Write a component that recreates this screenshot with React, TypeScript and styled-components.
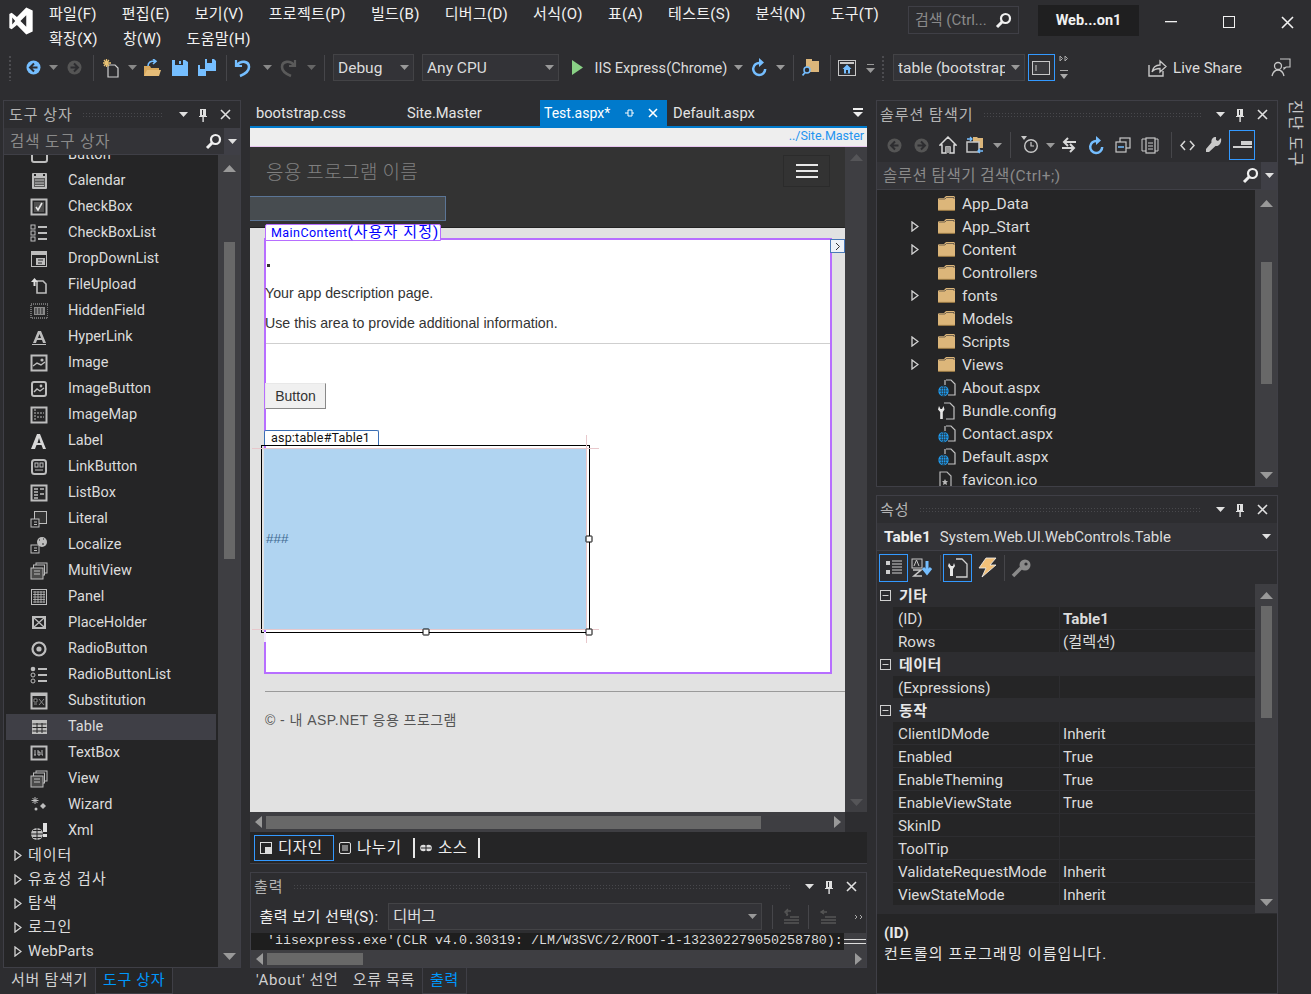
import React from "react";
import styled, { createGlobalStyle } from "styled-components";

const FONT = `Roboto, "Noto Sans CJK KR", sans-serif`;
const Global = createGlobalStyle`
  html, body { margin: 0; padding: 0; background: #2d2d30; }
  #root { width: 1311px; height: 994px; overflow: hidden; }
  * { box-sizing: border-box; }
`;

const Page = styled.div`
  width: 1311px; height: 994px; background: #2d2d30; color: #dcdcdc;
  font: 15px/20px ${FONT}; display: flex; flex-direction: column; overflow: hidden;
`;
const TitleBar = styled.div`display: flex; height: 50px; flex-shrink: 0;`;
const LogoSlot = styled.div`width: 49px; padding: 7px 0 0 9px; flex-shrink: 0;`;
const Menu = styled.div`
  width: 850px; flex-shrink: 0; display: flex; flex-wrap: wrap; gap: 0 25px; align-content: flex-start; padding-top: 2px;
`;
const MenuItem = styled.span`height: 25px; line-height: 25px; font-size: 15px; color: #f1f1f1; white-space: nowrap; letter-spacing: 0.3px;`;
const TitleSearch = styled.div`
  margin: 6px 0 0 9px; width: 111px; height: 28px; border: 1px solid #3f3f46; display: flex; align-items: center; flex-shrink: 0;
  padding: 0 6px; justify-content: space-between; color: #8a8a8a; white-space: nowrap;
`;
const SolutionName = styled.div`
  margin: 5px 0 0 19px; width: 101px; height: 31px; background: #1f1f20; color: #f1f1f1; flex-shrink: 0;
  font-weight: 700; font-size: 14.5px; display: flex; align-items: center; justify-content: center;
`;
const WinBtns = styled.div`display: flex; margin-left: 3px; flex-shrink: 0;`;
const WinBtn = styled.div`width: 58px; height: 44px; display: flex; align-items: center; justify-content: center;`;

const ToolRow = styled.div<{ $h: number }>`display: flex; align-items: center; height: ${(p) => p.$h}px; flex-shrink: 0;`;
const Slot = styled.div<{ $ml: number; $w: number }>`
  margin-left: ${(p) => p.$ml}px; width: ${(p) => p.$w}px; flex-shrink: 0;
  display: flex; align-items: center; justify-content: center; white-space: nowrap;
`;
const Spacer = styled.div<{ $h: number }>`height: ${(p) => p.$h}px; flex-shrink: 0;`;
const Sep = styled.div<{ $h?: number }>`width: 1px; height: ${(p) => p.$h ?? 26}px; background: #46464a;`;
const Grip = styled.div<{ $h?: number }>`
  width: 100%; height: ${(p) => p.$h ?? 26}px;
  background-image: radial-gradient(#4c4c50 0.8px, transparent 1px); background-size: 4px 4px;
`;
const Combo = styled.div`
  width: 100%; height: 27px; background: #333337; border: 1px solid #434346; padding: 0 4px;
  display: flex; align-items: center; justify-content: space-between; color: #dcdcdc; font-size: 15.5px; overflow: hidden;
`;
const ComboText = styled.span<{ $max?: number }>`overflow: hidden; white-space: nowrap; ${(p) => (p.$max ? `max-width:${p.$max}px;` : "")}`;
const ActiveBox = styled.div<{ $h: number }>`
  width: 100%; height: ${(p) => p.$h}px; border: 1px solid #3399ff; display: flex; align-items: center; justify-content: center;
`;
const LiveText = styled.span<{ $fs: number }>`font-size: ${(p) => p.$fs}px; color: #dcdcdc;`;

const Main = styled.div`display: flex; padding-left: 3px; height: 894px; flex-shrink: 0;`;
const Column = styled.div<{ $w: number; $ml?: number }>`
  width: ${(p) => p.$w}px; margin-left: ${(p) => p.$ml ?? 0}px; flex-shrink: 0; display: flex; flex-direction: column;
`;
const Panel = styled.div<{ $h?: number }>`
  display: flex; flex-direction: column; border: 1px solid #3f3f46; overflow: hidden; flex-shrink: 0;
  ${(p) => (p.$h ? `height:${p.$h}px;` : "flex:1;")}
`;
const HeaderRow = styled.div<{ $pl: number }>`display: flex; align-items: center; height: 27px; padding: 0 4px 0 ${(p) => p.$pl}px; flex-shrink: 0; color: #b4b4b4;`;
const HeaderTitle = styled.span`font-size: 15px; margin-right: 9px; letter-spacing: 1px; white-space: nowrap;`;
const HeaderGrip = styled.div`
  flex: 1; height: 6px; background-image: radial-gradient(#48484c 0.8px, transparent 1px); background-size: 3px 3px; margin-right: 10px;
`;
const HeaderBtn = styled.div`width: 22px; display: flex; justify-content: center; align-items: center;`;
const HeaderDrop = styled(HeaderBtn)`width: 18px;`;

const SearchBar = styled.div`display: flex; height: 27px; background: #333337; align-items: center; flex-shrink: 0; border-bottom: 1px solid #3f3f46;`;
const SearchText = styled.span`flex: 1; padding: 2px 0 0 6px; color: #8a8a8a; font-size: 15.5px; letter-spacing: 0.9px; white-space: nowrap;`;
const SolSearchText = styled(SearchText)`letter-spacing: 0.5px; padding-top: 1px;`;
const SearchDrop = styled.div`width: 16px; height: 100%; background: #3f3f46; display: flex; align-items: center; justify-content: center;`;
const SearchMag = styled.div`width: 22px; display: flex; justify-content: center;`;

const SplitBody = styled.div`flex: 1; display: flex; min-height: 0; overflow: hidden;`;
const ListPane = styled.div`flex: 1; background: #252526; overflow: hidden; min-width: 0;`;
const ScrollV = styled.div<{ $w?: number }>`
  width: ${(p) => p.$w ?? 22}px; background: #3e3e42; display: flex; flex-direction: column; align-items: center; flex-shrink: 0;
`;
const ArrowCell = styled.div<{ $h?: number }>`height: ${(p) => p.$h ?? 16}px; display: flex; align-items: center; justify-content: center; flex-shrink: 0;`;
const Thumb = styled.div<{ $h: number; $mt: number }>`
  width: 11px; height: ${(p) => p.$h}px; margin-top: ${(p) => p.$mt}px; background: #686868; flex-shrink: 0;
`;
const Fill = styled.div`flex: 1;`;

const ToolItem = styled.div<{ $sel?: boolean; $first?: boolean }>`
  height: 26px; display: flex; align-items: center; padding-left: ${(p) => (p.$sel ? 24 : 26)}px; font-size: 14.5px;
  margin: ${(p) => (p.$first ? "-13px 0 0" : p.$sel ? "0 2px" : "0")};
  background: ${(p) => (p.$sel ? "#3f3f46" : "transparent")}; color: #dcdcdc;
`;
const ToolIconBox = styled.div`width: 18px; height: 18px; margin-right: 20px; flex-shrink: 0; display: flex;`;
const Category = styled.div<{ $sp: number }>`
  height: 24px; display: flex; align-items: center; padding: 0 0 2px 10px; letter-spacing: ${(p) => p.$sp}px;
`;
const CatText = styled.span`margin-left: 6px;`;

const BottomTabs = styled.div<{ $ml: number }>`display: flex; height: 26px; flex-shrink: 0; margin-left: ${(p) => p.$ml}px;`;
const BottomTab = styled.div<{ $on?: boolean; $dark?: boolean; $px?: number }>`
  height: 26px; padding: 0 ${(p) => p.$px ?? 7}px; line-height: 24px; white-space: nowrap; letter-spacing: 0.7px; font-size: 15px;
  color: ${(p) => (p.$on ? "#0097fb" : "#d0d0d0")};
  ${(p) => (p.$on ? `background:${p.$dark ? "#252526" : "#2d2d30"};border:1px solid #3f3f46;border-top:none;` : "")}
`;

const DocTabs = styled.div`display: flex; height: 26px; position: relative; flex-shrink: 0; align-items: stretch;`;
const DocTab = styled.div<{ $w: number; $on?: boolean }>`
  width: ${(p) => p.$w}px; padding-left: ${(p) => (p.$on ? 4 : 6)}px; display: flex; align-items: center; gap: 14px;
  font-size: ${(p) => (p.$on ? 14 : 14.7)}px;
  background: ${(p) => (p.$on ? "#007acc" : "transparent")}; color: ${(p) => (p.$on ? "#fff" : "#e4e4e4")}; white-space: nowrap;
`;
const DocMenu = styled.div`margin-left: auto; width: 18px; display: flex; align-items: center; justify-content: center;`;
const PathBar = styled.div`
  height: 21px; flex-shrink: 0; border-top: 2px solid #007acc; background: #eeeeee; border-bottom: 1px solid #e6c3ef;
  text-align: right; padding-right: 3px; font-size: 12.5px; line-height: 16px; color: #2394f0;
`;
const EditorRow = styled.div`display: flex; height: 665px; flex-shrink: 0;`;
const Surface = styled.div`width: 595px; background: #e2e2e2; overflow: hidden; display: flex; flex-direction: column;`;
const NavBar = styled.div`height: 81px; flex-shrink: 0; background: #333333; border-bottom: 1px solid #222; position: relative;`;
const NavTop = styled.div`display: flex; height: 49px; align-items: center; padding: 0 15px 2px 16px; justify-content: space-between;`;
const Brand = styled.span`font: 300 19px/24px "Noto Sans CJK KR", sans-serif; color: #808080; letter-spacing: 0.4px;`;
const Burger = styled.div`
  width: 47px; height: 32px; border: 1px solid #2b2b2b; display: flex; flex-direction: column; gap: 4px; align-items: center; justify-content: center;
`;
const BurgerBar = styled.div`width: 22px; height: 2px; background: #e8e8e8;`;
const NavInput = styled.div`width: 196px; height: 25px; background: #474c50; border: 1px solid #5b7596; border-left: none;`;
const DesignBody = styled.div`padding: 10px 0 0 14px; flex: 1;`;
const Content = styled.div`
  position: relative; width: 568px; height: 436px; background: #fff; border: 2px solid #b76eff; display: flex; flex-direction: column;
  font: 14.2px/20px "Liberation Sans", "Noto Sans CJK KR", sans-serif; color: #333;
`;
const ContentTag = styled.div`
  position: absolute; left: -1px; top: -16px; width: 176px; height: 17px; padding-left: 5px; background: #fff; border: 1px solid #b76eff;
  border-radius: 2px 2px 0 0; color: #0000ff; font: 12.5px/15px Roboto, "Noto Sans CJK KR", sans-serif; white-space: nowrap; letter-spacing: 0.45px;
`;
const TagKo = styled.span`font-size: 15px; letter-spacing: 1.1px;`;
const SmartTag = styled.div`
  position: absolute; right: -15px; top: -1px; width: 15px; height: 14px; background: #eef2f8; border: 1px solid #4a78b8;
  display: flex; align-items: center; justify-content: center;
`;
const Dot = styled.div`width: 3px; height: 3px; background: #333; margin: 24px 0 0 1px;`;
const Para = styled.div<{ $mt: number }>`margin: ${(p) => p.$mt}px 0 0 -1px; height: 20px; white-space: nowrap;`;
const Rule = styled.div`height: 1px; background: #cfcfcf; margin-top: 10px; flex-shrink: 0;`;
const AspButton = styled.div`
  width: 61px; height: 26px; margin: 39px 0 0 -1px; background: #f0f0f0; border: 1px solid #e8e8e8; border-right-color: #888; border-bottom-color: #888;
  display: flex; align-items: center; justify-content: center; color: #333; font-size: 14px;
`;
const TableTag = styled.div`
  width: 115px; height: 15px; margin: 21px 0 0 -2px; background: #fff; border: 1px solid #3a6fb5; border-bottom: none; border-radius: 2px 2px 0 0;
  font: 12.5px/14px Roboto, sans-serif; color: #111; padding-left: 6px; white-space: nowrap; letter-spacing: 0.2px;
`;
const Selection = styled.div`
  position: relative; width: 329px; height: 188px; margin-left: -5px; border: 1px solid #000; padding: 2px; flex-shrink: 0;
`;
const BlueCell = styled.div`
  height: 182px; background: #b0d4f1; display: flex; align-items: center; padding-left: 2px; font-size: 13.5px; color: #3f6a92;
`;
const Handle = styled.div<{ $x: string; $y: string }>`
  position: absolute; width: 7px; height: 7px; background: #fff; border: 1px solid #000; border-radius: 1px;
  left: ${(p) => p.$x}; top: ${(p) => p.$y}; transform: translate(-50%, -50%);
`;
const GuideH = styled.div<{ $t: number }>`position: absolute; left: -10px; right: -10px; top: ${(p) => p.$t}px; height: 1px; background: #e8c8cc;`;
const GuideV = styled.div`position: absolute; right: 2px; top: -11px; bottom: -11px; width: 1px; background: #e8c8cc;`;
const BorderGap = styled.div`position: absolute; left: 2px; top: 100%; width: 2px; height: 10px; background: #f4eaff;`;
const FooterRule = styled.div`height: 1px; background: #9a9a9a; margin: 17px 0 0 1px;`;
const FooterText = styled.div`font: 14px/20px "Liberation Sans", "Noto Sans CJK KR", sans-serif; color: #555; margin: 18px 0 0 1px; white-space: nowrap; letter-spacing: 0.45px;`;

const HScroll = styled.div<{ $h: number; $w?: number }>`
  height: ${(p) => p.$h}px; display: flex; align-items: center; background: #3e3e42; flex-shrink: 0; ${(p) => (p.$w ? `width:${p.$w}px;` : "")}
`;
const HArrow = styled.div`width: 16px; display: flex; justify-content: center; flex-shrink: 0;`;
const HThumb = styled.div<{ $w: number; $h: number }>`width: ${(p) => p.$w}px; height: ${(p) => p.$h}px; background: #686868; flex-shrink: 0;`;
const HRow = styled.div`display: flex; flex-shrink: 0;`;
const Corner = styled.div`width: 22px; flex-shrink: 0; background: #2d2d30;`;
const ViewBar = styled.div`
  height: 32px; background: #252526; flex-shrink: 0; display: flex; align-items: center; padding-left: 4px; font-size: 15.5px; letter-spacing: 0.6px;
  border-bottom: 1px solid #3f3f46; color: #eee;
`;
const ViewBtn = styled.div<{ $on?: boolean; $w: number }>`
  width: ${(p) => p.$w}px; height: 26px; display: flex; align-items: center; gap: 6px; padding-left: 5px;
  ${(p) => (p.$on ? "border:1px solid #3399ff;" : "")}
`;
const ViewSep = styled.div<{ $ml: number }>`width: 2px; height: 20px; background: #e8e8e8; margin-left: ${(p) => p.$ml}px;`;

const OutputToolbar = styled.div`height: 33px; flex-shrink: 0;`;
const OutputLine = styled.div`height: 17px; display: flex; flex-shrink: 0; background: #3e3e42;`;
const OutputText = styled.div`
  width: 593px; background: #1e1e1e; font: 13.33px/16px "Liberation Mono", monospace; color: #dcdcdc; padding-left: 16px; white-space: pre; overflow: hidden;
`;
const Splitter = styled.div`flex: 1; height: 5px; margin-top: 6px; border-top: 1px solid #ddd; border-bottom: 1px solid #ddd;`;
const OutputLabel = styled.span`font-size: 15px; letter-spacing: 0.5px; color: #f1f1f1;`;

const SolSearch = styled(SearchBar)`height: 28px;`;
const TreeRow = styled.div`height: 23px; display: flex; align-items: center; flex-shrink: 0; color: #dcdcdc; font-size: 15.5px;`;
const TreeArrow = styled.div`width: 61px; padding-left: 34px; flex-shrink: 0; display: flex;`;
const TreeIcon = styled.div`width: 24px; flex-shrink: 0; display: flex;`;
const TreeList = styled.div`padding-top: 2px;`;

const ObjectRow = styled.div`
  height: 28px; display: flex; align-items: center; padding: 0 6px 0 7px; background: #333337; flex-shrink: 0; border-bottom: 1px solid #3f3f46;
`;
const ObjName = styled.b`margin-right: 9px; font-weight: 700; color: #eee; font-size: 15.5px;`;
const ObjType = styled.span`flex: 1; color: #dcdcdc; font-size: 15px;`;
const PropGrid = styled.div`height: 329px; display: flex; flex-shrink: 0; overflow: hidden;`;
const PropList = styled.div`flex: 1; background: #2d2d30; overflow: hidden; min-width: 0;`;
const CatRow = styled.div`height: 23px; display: flex; align-items: center; padding-left: 3px; font-weight: 700; color: #e8e8e8; background: #2d2d30; letter-spacing: 0.5px;`;
const CatLabel = styled.span`margin-left: 8px;`;
const PropRow = styled.div`display: flex; height: 23px; margin-left: 16px; background: #2d2d30; gap: 1px;`;
const PropName = styled.div`width: 166px; flex-shrink: 0; background: #252526; padding-left: 5px; line-height: 24px; height: 22px; white-space: nowrap; font-size: 15.2px; overflow: hidden;`;
const PropValue = styled.div<{ $bold?: boolean }>`
  flex: 1; background: #252526; padding-left: 3px; line-height: 24px; height: 22px; font-size: 15.2px; font-weight: ${(p) => (p.$bold ? 700 : 400)};
`;
const Description = styled.div`flex: 1; background: #252526; padding: 9px 7px; font-size: 15px; line-height: 21px; color: #e8e8e8; border-top: 1px solid #2d2d30;`;
const DescTitle = styled.div`font-weight: 700;`;
const DescText = styled.div`letter-spacing: 1.1px;`;

const SideStrip = styled.div`
  margin: 0 0 0 7px; width: 19px; height: 66px; writing-mode: vertical-rl; text-orientation: sideways; font-size: 15.5px; line-height: 19px; color: #c8c8c8;
  letter-spacing: 1.3px; white-space: nowrap;
`;

/* icons */
const Svg = ({ w = 16, h = 16, vb, children }: { w?: number; h?: number; vb?: string; children: React.ReactNode }) => (
  <svg width={w} height={h} viewBox={vb ?? `0 0 ${w} ${h}`} style={{ display: "block", flexShrink: 0 }}>{children}</svg>
);
const Drop = ({ c = "#999" }: { c?: string }) => <Svg w={9} h={5}><polygon points="0,0 9,0 4.5,5" fill={c} /></Svg>;
const Pin = () => (
  <Svg w={10} h={14}><path d="M2 1h6v7h1v1H1V8h1z M4 2v5h1V2z" fill="#e0e0e0" fillRule="evenodd" /><rect x="4.4" y="9" width="1.4" height="5" fill="#e0e0e0" /></Svg>
);
const Cross = ({ c = "#e0e0e0", s = 11 }: { c?: string; s?: number }) => (
  <Svg w={s} h={s}><path d={`M1 1L${s - 1} ${s - 1}M${s - 1} 1L1 ${s - 1}`} stroke={c} strokeWidth="1.6" /></Svg>
);
const Mag = ({ c = "#f0f0f0" }: { c?: string }) => (
  <Svg w={17} h={17}><circle cx="10.5" cy="6.5" r="4.5" fill="none" stroke={c} strokeWidth="2.2" /><path d="M7 10L2 15" stroke={c} strokeWidth="3" /></Svg>
);
const TriR = () => <Svg w={8} h={11}><polygon points="1,1 7,5.5 1,10" fill="none" stroke="#d4d4d4" strokeWidth="1.3" /></Svg>;
const Logo = () => (
  <Svg w={24} h={28} vb="0 0 20 24"><path fillRule="evenodd" fill="#fff" d="M14.5 0.5L20 3V21L14.5 23.5L6.5 15.5L2 19L0 18V6L2 5L6.5 8.5ZM14.5 7L9.5 12L14.5 17ZM2.5 9V15L5 12Z" /></Svg>
);
const CircleNav = ({ dir, c, a }: { dir: "l" | "r"; c: string; a: string }) => (
  <Svg w={15} h={15}>
    <circle cx="7.5" cy="7.5" r="7" fill={c} />
    <path d={dir === "l" ? "M8 3.5L4 7.5L8 11.5M4.5 7.5H11.5" : "M7 3.5L11 7.5L7 11.5M10.5 7.5H3.5"} stroke={a} strokeWidth="2" fill="none" />
  </Svg>
);
const NewProj = () => (
  <Svg w={18} h={20}>
    <path d="M6 7h7l3 3v9H6z" fill="none" stroke="#d0d0d0" strokeWidth="1.2" />
    <path d="M4.5 1v8M1 5h8M2 2l5 6M7 2l-5 6" stroke="#e8c274" strokeWidth="1.3" />
  </Svg>
);
const OpenFolder = () => (
  <Svg w={19} h={18}>
    <path d="M1 7h6l1 2h8v8H1z" fill="#d8a85c" />
    <path d="M5 7C5 3 8 2 12 2M10 0l3 2.2L10 5" stroke="#75beff" strokeWidth="1.6" fill="none" />
    <path d="M1 17L4 11H18L16 17z" fill="#e6bd78" />
  </Svg>
);
const Save = () => (
  <Svg w={16} h={16}><path d="M0 0h3v5h8V0h2l3 2v14H0z" fill="#75beff" /><rect x="7" y="1" width="2" height="3" fill="#75beff" /></Svg>
);
const SaveAll = () => (
  <Svg w={18} h={17}>
    <path d="M7 0h2v4h5V0h2l2 2v10H7z" fill="#75beff" />
    <path d="M0 6h2v4h5V6h1v11H0z" fill="#75beff" />
  </Svg>
);
const Undo = ({ c }: { c: string }) => (
  <Svg w={18} h={20}><path d="M2 2v6h6" stroke={c} strokeWidth="2.2" fill="none" /><path d="M3 7C7 2 15 3 15 9C15 13 11 16 6 18" stroke={c} strokeWidth="2.6" fill="none" /></Svg>
);
const Redo = () => (
  <Svg w={18} h={20}><path d="M16 2v6h-6" stroke="#5a5a5a" strokeWidth="2.2" fill="none" /><path d="M15 7C11 2 3 3 3 9C3 13 7 16 12 18" stroke="#5a5a5a" strokeWidth="2.6" fill="none" /></Svg>
);
const Play = () => <Svg w={11} h={15}><polygon points="0,0 11,7.5 0,15" fill="#89d185" /></Svg>;
const Refresh = () => (
  <Svg w={16} h={19}><path d="M9 5A6 6 0 1 0 14.2 11" stroke="#75beff" strokeWidth="2.5" fill="none" /><polygon points="8,0 13,4.5 8,9" fill="#75beff" /></Svg>
);
const FolderFind = () => (
  <Svg w={17} h={19}>
    <path d="M4 1h6v2h7v11H4z" fill="#dcb67a" />
    <circle cx="5" cy="12" r="3" fill="#2d2d30" stroke="#75beff" strokeWidth="1.5" />
    <path d="M3 14.5L0.5 17.5" stroke="#75beff" strokeWidth="1.8" />
  </Svg>
);
const BrowserHome = () => (
  <Svg w={18} h={18}>
    <rect x="0.5" y="1.5" width="17" height="15" fill="none" stroke="#c8c8c8" />
    <rect x="2" y="3" width="14" height="2" fill="#c8c8c8" />
    <path d="M9 5.5L13.5 10H12v4.5H6V10H4.5z" fill="#75beff" />
    <rect x="8" y="11" width="2" height="3.5" fill="#2d2d30" />
  </Svg>
);
const ConsoleBox = () => (
  <Svg w={18} h={14}><rect x="0.5" y="0.5" width="17" height="13" fill="#3a3a3d" stroke="#c8c8c8" /><path d="M4 4v6" stroke="#c8c8c8" /></Svg>
);
const OverflowArrows = () => (
  <Svg w={10} h={26}>
    <path d="M1 1l2.5 2.5L1 6zM6 1l2.5 2.5L6 6z" fill="none" stroke="#aaa" />
    <rect x="1" y="15" width="8" height="1" fill="#aaa" />
    <polygon points="1,19 9,19 5,24" fill="#aaa" />
  </Svg>
);
const OverflowDrop = () => (
  <Svg w={9} h={12}><rect x="1" y="2" width="7" height="1" fill="#999" /><polygon points="0,6 9,6 4.5,11" fill="#999" /></Svg>
);
const LiveShareIcon = () => (
  <Svg w={19} h={18}>
    <path d="M1 6v11h14v-5" fill="none" stroke="#c8c8c8" strokeWidth="1.4" />
    <path d="M4 13C5 8 8 6 12 6V2l6 5.5L12 13V9.5C9 9.5 6 10 4 13z" fill="none" stroke="#c8c8c8" strokeWidth="1.3" />
  </Svg>
);
const Feedback = () => (
  <Svg w={20} h={19}>
    <path d="M9 1h10v8h-4l-2 2V9" fill="none" stroke="#c8c8c8" strokeWidth="1.1" />
    <circle cx="7" cy="8" r="3.5" fill="none" stroke="#c8c8c8" strokeWidth="1.3" />
    <path d="M1 18C2 14 4 12 7 12S12 14 13 18" fill="none" stroke="#c8c8c8" strokeWidth="1.3" />
  </Svg>
);
const Minimize = () => <Svg w={12} h={2}><rect width="12" height="1.3" fill="#f1f1f1" /></Svg>;
const Maximize = () => <Svg w={12} h={12}><rect x="0.5" y="0.5" width="11" height="11" fill="none" stroke="#f1f1f1" /></Svg>;

const Folder = () => (
  <Svg w={17} h={15}><path d="M0 3L1 2H6L8 0H16L17 1V14L16 15H1L0 14z" fill="#dcb67a" /><path d="M1 3h6l1.5-1.5H16V3" fill="none" stroke="#2d2d30" strokeWidth="0.6" /><path d="M0 14.4h17" stroke="#8a6e3e" strokeWidth="1" /></Svg>
);
const AspxFile = () => (
  <Svg w={18} h={18}>
    <path d="M8 1h5l4 4v11H10M7 6V1" fill="none" stroke="#c4c4c4" strokeWidth="1.2" />
    <circle cx="5.5" cy="12" r="5.2" fill="#1f9cf0" />
    <path d="M0.5 12h10M5.5 7v10M2 9.3h7M2 14.7h7" stroke="#252526" strokeWidth="0.6" />
    <ellipse cx="5.5" cy="12" rx="2.3" ry="5" fill="none" stroke="#252526" strokeWidth="0.6" />
  </Svg>
);
const ConfigFile = () => (
  <Svg w={18} h={18}>
    <path d="M6 1h6l4 4v12H8" fill="none" stroke="#c4c4c4" strokeWidth="1.2" />
    <path d="M1 4l1.5 3h1.5l1.5-3 1 3.5L4.8 10v7H2.2v-7L0 7.5z" fill="#e6e6e6" />
  </Svg>
);
const IcoFile = () => (
  <Svg w={16} h={18}>
    <path d="M2 17V1h7l4 4v12z" fill="none" stroke="#b8b8b8" strokeWidth="1.2" />
    <path d="M7 8l1 2h2l-1.5 1.5L9 14l-2-1-2 1 .5-2.5L4 10h2z" fill="#b8b8b8" />
  </Svg>
);

const g = "#bdbdbd";
const dk = "#252526";
const toolIcons: Record<string, React.ReactNode> = {
  Calendar: <><rect x="2" y="1" width="15" height="16" rx="1" fill={g} /><rect x="4" y="6" width="11" height="9" fill="#5a5a5a" /><path d="M5 8h9M5 11h9M5 13.5h9" stroke={g} /><rect x="4" y="2" width="2" height="2" fill={dk} /><rect x="13" y="2" width="2" height="2" fill={dk} /></>,
  CheckBox: <><rect x="1.5" y="1.5" width="15" height="15" fill="none" stroke={g} strokeWidth="2" /><rect x="4" y="4" width="10" height="10" fill="#505050" /><path d="M6 9l2 3 4-7" fill="none" stroke="#e8e8e8" strokeWidth="1.6" /></>,
  CheckBoxList: <><rect x="1" y="1" width="4" height="4" fill="none" stroke={g} /><rect x="1" y="7" width="4" height="4" fill="none" stroke={g} /><rect x="1" y="13" width="4" height="4" fill="none" stroke={g} /><path d="M8 3h9M8 9h9M8 15h9" stroke={g} strokeWidth="2" /></>,
  DropDownList: <><rect x="1.5" y="1.5" width="15" height="15" fill="none" stroke={g} /><rect x="1" y="1" width="16" height="4" fill={g} /><path d="M6 8h9v7H6z" fill={g} /><path d="M8 10h5M8 13h4" stroke={dk} /></>,
  FileUpload: <><path d="M7 5h6l3 3v9H7z" fill="none" stroke={g} strokeWidth="1.6" /><path d="M1 6l3.5-4L8 6H5.5v4h-2V6z" fill="#e0e0e0" /></>,
  HiddenField: <><rect x="1" y="2" width="17" height="14" fill="none" stroke={g} strokeDasharray="1 1" /><rect x="4" y="5" width="11" height="8" fill="#8a8a8a" /><path d="M6 6v6M9 6v6M12 6v6" stroke={dk} /></>,
  HyperLink: <><path d="M3 15L8 3h3l5 12h-3l-1-3H7l-1 3zM8 10h3L9.5 6z" fill={g} fillRule="evenodd" /><path d="M2 16.5h14" stroke={g} /></>,
  Image: <><rect x="1.5" y="1.5" width="15" height="15" fill="none" stroke={g} strokeWidth="2" /><path d="M3 12l4-3 4 2 4-3" fill="none" stroke={g} strokeWidth="1.4" /><circle cx="12" cy="6" r="1.6" fill={g} /></>,
  ImageButton: <><rect x="2" y="2" width="14" height="14" rx="2" fill="none" stroke={g} strokeWidth="2" /><path d="M4 12l3-3 3 2 4-3" fill="none" stroke={g} strokeWidth="1.4" /><circle cx="11" cy="6" r="1.4" fill={g} /></>,
  ImageMap: <><rect x="1.5" y="1.5" width="15" height="15" fill="none" stroke={g} strokeWidth="2" /><path d="M5 3v12" stroke={g} strokeDasharray="2 1" /><path d="M7 7h7M7 11h7" stroke={g} strokeDasharray="2 1" /></>,
  Label: <path d="M1 17L7 2h3l6 15h-3l-1.5-4h-5L5 17zM7.5 11h3L9 6z" fill="#d8d8d8" fillRule="evenodd" />,
  LinkButton: <><rect x="2" y="2" width="14" height="14" rx="2.5" fill="none" stroke={g} strokeWidth="2" /><rect x="5" y="5" width="3" height="4" fill="none" stroke={g} /><rect x="10" y="5" width="3" height="4" fill="none" stroke={g} /><path d="M5 12h8" stroke={g} /></>,
  ListBox: <><rect x="1.5" y="1.5" width="15" height="15" fill="none" stroke={g} strokeWidth="2" /><path d="M4 5h4M4 8h4M4 11h4M4 14h4M10 5h4M10 10h4" stroke={g} strokeWidth="1.6" /></>,
  Literal: <><rect x="4.5" y="1.5" width="12" height="12" fill="#333" stroke={g} /><rect x="1" y="9" width="8" height="8" fill={dk} stroke={g} /><path d="M4 12h3M4 14.5h3" stroke={g} /></>,
  Localize: <><circle cx="12" cy="6" r="5" fill={g} /><path d="M9 4h1M12 8h2M13 3h1" stroke={dk} /><rect x="1" y="9" width="8" height="8" fill={dk} stroke={g} /><path d="M4 12h3M4 14.5h3" stroke={g} /></>,
  MultiView: <><rect x="6" y="1" width="11" height="10" fill="none" stroke={g} /><rect x="3.5" y="3" width="11" height="10" fill={dk} stroke={g} /><rect x="1" y="6" width="12" height="11" fill="#4a4a4a" stroke={g} /><path d="M4 9h6M4 12h6" stroke={g} /></>,
  Panel: <><rect x="1.5" y="1.5" width="15" height="15" fill="none" stroke={g} /><path d="M3 4h12M3 6.5h12M3 9h12M3 11.5h12M3 14h12M5 3v12M8 3v12M11 3v12M14 3v12" stroke={g} strokeWidth="0.8" /></>,
  PlaceHolder: <><rect x="3" y="3" width="12" height="11" fill="none" stroke={g} strokeWidth="2" /><path d="M4 4l10 9M14 4L4 13" stroke={g} strokeWidth="1.3" /></>,
  RadioButton: <><circle cx="9" cy="9" r="6.5" fill="none" stroke={g} strokeWidth="2.2" /><circle cx="9" cy="9" r="2.6" fill={g} /></>,
  RadioButtonList: <><circle cx="3" cy="3" r="2.3" fill={g} /><circle cx="3" cy="9" r="2" fill="none" stroke={g} /><circle cx="3" cy="15" r="2" fill="none" stroke={g} /><path d="M8 3h9M8 9h9M8 15h9" stroke={g} strokeWidth="2" /></>,
  Substitution: <><rect x="1.5" y="1.5" width="15" height="15" fill="none" stroke={g} strokeWidth="2" /><rect x="1" y="1" width="16" height="3" fill={g} /><path d="M4 7h3v3H4zM9 7l5 6M14 7l-5 6M4 12h3" stroke="#8a8a8a" /></>,
  Table: <><rect x="2" y="2" width="15" height="14" fill={g} /><path d="M2.5 6h14M2.5 9.5h14M2.5 13h14M7 5v10M12 5v10" stroke={dk} /></>,
  TextBox: <><rect x="1.5" y="2.5" width="15" height="13" fill="none" stroke={g} strokeWidth="2" /><path d="M4 11h2M5 6v5M8 6v5h2V8H8M12 6v5h1" stroke={g} fill="none" /></>,
  View: <><rect x="6" y="1" width="11" height="10" fill="none" stroke={g} /><rect x="3.5" y="3" width="11" height="10" fill={dk} stroke={g} /><rect x="1" y="6" width="12" height="11" fill="#4a4a4a" stroke={g} /><path d="M4 9h6M4 12h6" stroke={g} /></>,
  Wizard: <><path d="M5 1v7M1.5 4.5h7M2.5 2l5 5M7.5 2l-5 5" stroke={g} /><path d="M13 7l3 3-3 3-3-3z" fill={g} /><circle cx="6" cy="13" r="1.5" fill={g} /></>,
  Xml: <><circle cx="7" cy="12" r="6" fill={g} /><path d="M1 12h12M7 6v12M3 8.5h8M3 15.5h8" stroke={dk} /><rect x="13" y="1" width="4" height="9" fill="#e0e0e0" /><rect x="13" y="12" width="4" height="3" fill="#e0e0e0" /></>,
};
const tools = ["Calendar", "CheckBox", "CheckBoxList", "DropDownList", "FileUpload", "HiddenField", "HyperLink", "Image", "ImageButton", "ImageMap", "Label", "LinkButton", "ListBox", "Literal", "Localize", "MultiView", "Panel", "PlaceHolder", "RadioButton", "RadioButtonList", "Substitution", "Table", "TextBox", "View", "Wizard", "Xml"];

type PlacedItem = { c: number; w?: number; n?: React.ReactNode };
const Placed = ({ items, origin, h }: { items: PlacedItem[]; origin: number; h: number }) => {
  let right = origin;
  return (
    <ToolRow $h={h}>
      {items.map((it, i) => {
        const w = it.w ?? 18;
        const left = it.c - w / 2;
        const ml = left - right;
        right = left + w;
        return <Slot key={i} $ml={ml} $w={w}>{it.n}</Slot>;
      })}
    </ToolRow>
  );
};

const PanelHeader = ({ title, pl = 3 }: { title: string; pl?: number }) => (
  <HeaderRow $pl={pl}>
    <HeaderTitle>{title}</HeaderTitle>
    <HeaderGrip />
    <HeaderDrop><Drop c="#e0e0e0" /></HeaderDrop>
    <HeaderBtn><Pin /></HeaderBtn>
    <HeaderBtn><Cross /></HeaderBtn>
  </HeaderRow>
);
const ScrollUp = ({ c = "#999" }: { c?: string }) => <Svg w={13} h={7}><polygon points="6.5,0 13,7 0,7" fill={c} /></Svg>;
const ScrollDown = ({ c = "#999" }: { c?: string }) => <Svg w={13} h={7}><polygon points="0,0 13,0 6.5,7" fill={c} /></Svg>;
const HL = () => <Svg w={7} h={12}><polygon points="7,0 7,12 0,6" fill="#999" /></Svg>;
const HR = () => <Svg w={7} h={12}><polygon points="0,0 0,12 7,6" fill="#999" /></Svg>;
const Minus = () => (
  <Svg w={11} h={11}><rect x="0.5" y="0.5" width="10" height="10" fill="none" stroke="#d0d0d0" /><path d="M2.5 5.5h6" stroke="#d0d0d0" /></Svg>
);

const treeItems: [string, string, boolean][] = [
  ["App_Data", "f", false], ["App_Start", "f", true], ["Content", "f", true], ["Controllers", "f", false], ["fonts", "f", true],
  ["Models", "f", false], ["Scripts", "f", true], ["Views", "f", true], ["About.aspx", "a", false], ["Bundle.config", "c", false],
  ["Contact.aspx", "a", false], ["Default.aspx", "a", false], ["favicon.ico", "i", false],
];
const categories: [string, number][] = [["데이터", 1], ["유효성 검사", 1], ["탐색", 1], ["로그인", 1], ["WebParts", 0.1]];

export default function App() {
  const mainTools: PlacedItem[] = [
    { c: 10, w: 4, n: <Grip /> },
    { c: 33, n: <CircleNav dir="l" c="#75beff" a="#2d2d30" /> },
    { c: 53, w: 10, n: <Drop c="#888" /> },
    { c: 74, n: <CircleNav dir="r" c="#555" a="#2d2d30" /> },
    { c: 93, w: 1, n: <Sep /> },
    { c: 111, n: <NewProj /> },
    { c: 132, w: 10, n: <Drop c="#888" /> },
    { c: 152, w: 20, n: <OpenFolder /> },
    { c: 180, n: <Save /> },
    { c: 207, n: <SaveAll /> },
    { c: 226, w: 1, n: <Sep /> },
    { c: 243, n: <Undo c="#75beff" /> },
    { c: 267, w: 10, n: <Drop c="#888" /> },
    { c: 288, n: <Redo /> },
    { c: 311, w: 10, n: <Drop c="#666" /> },
    { c: 324, w: 1, n: <Sep /> },
    { c: 373.5, w: 81, n: <Combo><ComboText>Debug</ComboText><Drop c="#999" /></Combo> },
    { c: 490.5, w: 137, n: <Combo><ComboText>Any CPU</ComboText><Drop c="#999" /></Combo> },
    { c: 577, w: 12, n: <Play /> },
    { c: 661, w: 134, n: <LiveText $fs={14.6}>IIS Express(Chrome)</LiveText> },
    { c: 738, w: 10, n: <Drop c="#999" /> },
    { c: 759, n: <Refresh /> },
    { c: 780, w: 10, n: <Drop c="#999" /> },
    { c: 793, w: 1, n: <Sep /> },
    { c: 810, n: <FolderFind /> },
    { c: 830, w: 1, n: <Sep /> },
    { c: 847, n: <BrowserHome /> },
    { c: 870, w: 10, n: <OverflowDrop /> },
    { c: 883, w: 4, n: <Grip /> },
    { c: 959, w: 132, n: <Combo><ComboText $max={107}>table (bootstrap</ComboText><Drop c="#999" /></Combo> },
    { c: 1041, w: 27, n: <ActiveBox $h={27}><ConsoleBox /></ActiveBox> },
    { c: 1064, w: 10, n: <OverflowArrows /> },
    { c: 1157, n: <LiveShareIcon /> },
    { c: 1207.5, w: 70, n: <LiveText $fs={15}>Live Share</LiveText> },
    { c: 1281, w: 20, n: <Feedback /> },
  ];
  const solTools: PlacedItem[] = [
    { c: 894, n: <CircleNav dir="l" c="#555" a="#2d2d30" /> },
    { c: 921, n: <CircleNav dir="r" c="#555" a="#2d2d30" /> },
    { c: 948, w: 20, n: <Svg w={18} h={18}><path d="M9 1L17 9H15V17H11V11H7V17H3V9H1z" fill="none" stroke="#d8d8d8" strokeWidth="1.5" /><rect x="7" y="11" width="4" height="6" fill="#999" /></Svg> },
    { c: 975, w: 20, n: <Svg w={20} h={19}><path d="M8 1h4l1 1h5v10H8z" fill="#dcb67a" /><rect x="2" y="6" width="12" height="10" fill="#2d2d30" stroke="#c8c8c8" strokeWidth="1.5" /><path d="M2 3h5M5 1l2 2-2 2M18 15h-4M15 13l-2 2 2 2" stroke="#75beff" strokeWidth="1.3" fill="none" /></Svg> },
    { c: 997, w: 10, n: <Drop c="#999" /> },
    { c: 1010, w: 1, n: <Sep /> },
    { c: 1030, w: 20, n: <Svg w={18} h={18}><polygon points="0,0 6,0 3,4" fill="#c8c8c8" /><circle cx="10" cy="10" r="6.3" fill="none" stroke="#c8c8c8" strokeWidth="1.4" /><path d="M10 6v4h3" stroke="#c8c8c8" strokeWidth="1.2" fill="none" /></Svg> },
    { c: 1050, w: 10, n: <Drop c="#999" /> },
    { c: 1069, n: <Svg w={16} h={16}><path d="M15 5H3M7 1L3 5l4 4M1 11h12M9 7l4 4-4 4" stroke="#d8d8d8" strokeWidth="2" fill="none" /></Svg> },
    { c: 1096, n: <Refresh /> },
    { c: 1123, n: <Svg w={16} h={16}><rect x="5" y="1" width="10" height="10" fill="none" stroke="#c8c8c8" strokeWidth="1.2" /><rect x="1" y="5" width="10" height="10" fill="#2d2d30" stroke="#c8c8c8" strokeWidth="1.2" /><path d="M3 10h6" stroke="#75beff" strokeWidth="1.5" /></Svg> },
    { c: 1150, n: <Svg w={18} h={18}><path d="M5 3H1v12h4M13 3h4v12h-4" fill="none" stroke="#c8c8c8" /><rect x="5" y="2" width="9" height="15" fill="#2d2d30" stroke="#c8c8c8" strokeWidth="1.2" /><path d="M7 7h5M7 10h5M7 13h5" stroke="#c8c8c8" /></Svg> },
    { c: 1171, w: 1, n: <Sep /> },
    { c: 1187, n: <Svg w={15} h={11}><path d="M5 1L1 5.5 5 10M10 1l4 4.5-4 4.5" stroke="#d8d8d8" strokeWidth="1.5" fill="none" /></Svg> },
    { c: 1214, n: <Svg w={18} h={18}><path d="M16 2l-3 3-2-1 0-3C8 1 6 3 6.5 6.5L1 13v3h3l6.5-6c3.5.5 6.5-3 5.5-8z" fill="#c8c8c8" /></Svg> },
    { c: 1242, w: 26, n: <ActiveBox $h={30}><Svg w={19} h={8}><rect x="8" y="0" width="11" height="4" fill="#d0d0d0" /><rect x="0" y="5" width="19" height="2" fill="#d0d0d0" /></Svg></ActiveBox> },
  ];
  const propTools: PlacedItem[] = [
    { c: 893.5, w: 29, n: <ActiveBox $h={28}><Svg w={18} h={16}><rect x="1" y="1" width="4" height="4" fill="#d0d0d0" /><rect x="1" y="10" width="4" height="4" fill="#d0d0d0" /><path d="M7 1h10M7 4h10M7 7h10M7 10h10M7 13h10" stroke="#d0d0d0" /></Svg></ActiveBox> },
    { c: 922, w: 22, n: <Svg w={22} h={20}><rect x="1" y="1" width="10" height="9" fill="none" stroke="#c8c8c8" /><path d="M3 8l2.5-6L8 8" stroke="#c8c8c8" fill="none" /><path d="M2 12h8l-7 6h8" stroke="#c8c8c8" strokeWidth="1.6" fill="none" /><path d="M16 3v11M12 10l4 5 4-5" stroke="#75beff" strokeWidth="3" fill="none" /></Svg> },
    { c: 940, w: 1, n: <Sep /> },
    { c: 957.5, w: 29, n: <ActiveBox $h={28}><Svg w={20} h={20}><path d="M8 1h6l5 5v13H8" fill="none" stroke="#d0d0d0" strokeWidth="1.3" /><path d="M1 5l2 3 2 0 1-3 1 3-2 3v7H2v-7L0 8z" fill="#e6e6e6" /></Svg></ActiveBox> },
    { c: 987, w: 20, n: <Svg w={19} h={21}><polygon points="8,1 18,1 12,8 18,8 4,20 8,11 1,11" fill="#f2c078" stroke="#f2f2f2" strokeWidth="0.8" /></Svg> },
    { c: 1004, w: 1, n: <Sep /> },
    { c: 1021, w: 20, n: <Svg w={21} h={20}><circle cx="14" cy="7" r="5.5" fill="#8a8a8a" /><circle cx="15" cy="6" r="1.6" fill="#2d2d30" /><path d="M10 10L2 18" stroke="#8a8a8a" strokeWidth="3.6" /></Svg> },
  ];
  const outTools: PlacedItem[] = [
    { c: 319, w: 122, n: <OutputLabel>출력 보기 선택(S):</OutputLabel> },
    { c: 575, w: 374, n: <Combo><ComboText>디버그</ComboText><Drop c="#999" /></Combo> },
    { c: 772, w: 1, n: <Sep $h={24} /> },
    { c: 790, w: 18, n: <Svg w={17} h={18}><path d="M5 8V3h4M6 1L3 4l3 3" stroke="#555" fill="none" strokeWidth="1.4" /><path d="M8 9h9M2 12h15M2 15h15" stroke="#555" strokeWidth="1.6" /></Svg> },
    { c: 808, w: 1, n: <Sep $h={24} /> },
    { c: 827, w: 18, n: <Svg w={17} h={18}><path d="M8 4H3M5 2L2 4l3 2" stroke="#555" fill="none" strokeWidth="1.4" /><path d="M6 9h11M2 12h15M2 15h15" stroke="#555" strokeWidth="1.6" /></Svg> },
    { c: 858, w: 10, n: <Svg w={9} h={6}><path d="M1 1l2 2-2 2M6 1l2 2-2 2" stroke="#aaa" fill="none" /></Svg> },
  ];

  return (
    <Page>
      <Global />
      <TitleBar>
        <LogoSlot><Logo /></LogoSlot>
        <Menu>
          {["파일(F)", "편집(E)", "보기(V)", "프로젝트(P)", "빌드(B)", "디버그(D)", "서식(O)", "표(A)", "테스트(S)", "분석(N)", "도구(T)", "확장(X)", "창(W)", "도움말(H)"].map((m) => (
            <MenuItem key={m}>{m}</MenuItem>
          ))}
        </Menu>
        <TitleSearch>검색 (Ctrl...<Mag /></TitleSearch>
        <SolutionName>Web...on1</SolutionName>
        <WinBtns>
          <WinBtn><Minimize /></WinBtn>
          <WinBtn><Maximize /></WinBtn>
          <WinBtn><Cross c="#f1f1f1" s={13} /></WinBtn>
        </WinBtns>
      </TitleBar>
      <Placed items={mainTools} origin={0} h={35} />
      <Spacer $h={15} />
      <Main>
        <Column $w={238}>
          <Panel>
            <PanelHeader title="도구 상자" pl={5} />
            <SearchBar>
              <SearchText>검색 도구 상자</SearchText>
              <SearchMag><Mag /></SearchMag>
              <SearchDrop><Drop c="#e0e0e0" /></SearchDrop>
            </SearchBar>
            <SplitBody>
              <ListPane>
                <ToolItem $first><ToolIconBox><Svg w={18} h={18}><rect x="2" y="1" width="15" height="15" rx="2" fill="none" stroke={g} strokeWidth="2" /></Svg></ToolIconBox>Button</ToolItem>
                {tools.map((t) => (
                  <ToolItem key={t} $sel={t === "Table"}>
                    <ToolIconBox><Svg w={18} h={18}>{toolIcons[t]}</Svg></ToolIconBox>{t}
                  </ToolItem>
                ))}
                {categories.map(([c, sp]) => (
                  <Category key={c} $sp={sp}><TriR /><CatText>{c}</CatText></Category>
                ))}
              </ListPane>
              <ScrollV>
                <ArrowCell $h={26}><ScrollUp /></ArrowCell>
                <Thumb $h={317} $mt={61} />
                <Fill />
                <ArrowCell $h={22}><ScrollDown /></ArrowCell>
              </ScrollV>
            </SplitBody>
          </Panel>
          <BottomTabs $ml={1}>
            <BottomTab>서버 탐색기</BottomTab>
            <BottomTab $on $dark>도구 상자</BottomTab>
          </BottomTabs>
        </Column>

        <Column $w={617} $ml={9}>
          <DocTabs>
            <DocTab $w={151}>bootstrap.css</DocTab>
            <DocTab $w={139}>Site.Master</DocTab>
            <DocTab $w={127} $on>
              Test.aspx*
              <Svg w={10} h={10}><path d="M1 5h3M4 2h4v6H4zM8 5h2" stroke="#fff" fill="none" /></Svg>
              <Cross c="#fff" s={10} />
            </DocTab>
            <DocTab $w={105}>Default.aspx</DocTab>
            <DocMenu>
              <Svg w={10} h={10}><rect width="10" height="2" fill="#eee" /><polygon points="0,4 10,4 5,9" fill="#eee" /></Svg>
            </DocMenu>
          </DocTabs>
          <PathBar>../Site.Master</PathBar>
          <EditorRow>
            <Surface>
              <NavBar>
                <NavTop>
                  <Brand>응용 프로그램 이름</Brand>
                  <Burger><BurgerBar /><BurgerBar /><BurgerBar /></Burger>
                </NavTop>
                <NavInput />
              </NavBar>
              <DesignBody>
                <Content>
                  <ContentTag>MainContent<TagKo>(사용자 지정)</TagKo></ContentTag>
                  <SmartTag><Svg w={6} h={9}><path d="M1 1l3.5 3.5L1 8" stroke="#333" fill="none" /></Svg></SmartTag>
                  <Dot />
                  <Para $mt={16}>Your app description page.</Para>
                  <Para $mt={10}>Use this area to provide additional information.</Para>
                  <Rule />
                  <AspButton>Button</AspButton>
                  <TableTag>asp:table#Table1</TableTag>
                  <Selection>
                    <BlueCell>###</BlueCell>
                    <GuideH $t={2} />
                    <GuideH $t={183} />
                    <GuideV />
                    <BorderGap />
                    <Handle $x="100%" $y="50%" />
                    <Handle $x="50%" $y="100%" />
                    <Handle $x="100%" $y="100%" />
                  </Selection>
                </Content>
                <FooterRule />
                <FooterText>© - 내 ASP.NET 응용 프로그램</FooterText>
              </DesignBody>
            </Surface>
            <ScrollV>
              <ArrowCell $h={20}><ScrollUp c="#555558" /></ArrowCell>
              <Fill />
              <ArrowCell $h={20}><ScrollDown c="#555558" /></ArrowCell>
            </ScrollV>
          </EditorRow>
          <HRow>
            <HScroll $h={20} $w={595}>
              <HArrow><HL /></HArrow>
              <HThumb $w={495} $h={13} />
              <Fill />
              <HArrow><HR /></HArrow>
            </HScroll>
            <Corner />
          </HRow>
          <ViewBar>
            <ViewBtn $on $w={80}>
              <Svg w={12} h={12}><rect x="0.5" y="0.5" width="11" height="11" fill="none" stroke="#ddd" /><rect x="5" y="5" width="6" height="6" fill="#ddd" /></Svg>디자인
            </ViewBtn>
            <ViewBtn $w={70}>
              <Svg w={12} h={12}><rect x="0.5" y="0.5" width="11" height="11" rx="1.5" fill="none" stroke="#ddd" /><path d="M3 4h6M3 6h6M3 8h6" stroke="#ddd" /></Svg>나누기
            </ViewBtn>
            <ViewSep $ml={9} />
            <ViewBtn $w={63}>
              <Svg w={12} h={12}><circle cx="3.5" cy="6" r="3.3" fill="#ddd" /><circle cx="8.5" cy="6" r="3.3" fill="#ddd" /><path d="M6 1v10M1 6h10" stroke="#252526" /></Svg>소스
            </ViewBtn>
            <ViewSep $ml={0} />
          </ViewBar>
          <Spacer $h={8} />
          <Panel $h={96}>
            <PanelHeader title="출력" />
            <OutputToolbar><Placed items={outTools} origin={251} h={33} /></OutputToolbar>
            <OutputLine>
              <OutputText>'iisexpress.exe'(CLR v4.0.30319: /LM/W3SVC/2/ROOT-1-132302279050258780):</OutputText>
              <Splitter />
            </OutputLine>
            <HScroll $h={18}>
              <HArrow><HL /></HArrow>
              <HThumb $w={96} $h={12} />
              <Fill />
              <HArrow><HR /></HArrow>
            </HScroll>
          </Panel>
          <BottomTabs $ml={-1}>
            <BottomTab>'About' 선언</BottomTab>
            <BottomTab>오류 목록</BottomTab>
            <BottomTab $on>출력</BottomTab>
          </BottomTabs>
        </Column>

        <Column $w={402} $ml={9}>
          <Panel $h={387}>
            <PanelHeader title="솔루션 탐색기" />
            <Placed items={solTools} origin={877} h={34} />
            <SolSearch>
              <SolSearchText>솔루션 탐색기 검색(Ctrl+;)</SolSearchText>
              <SearchMag><Mag /></SearchMag>
              <SearchDrop><Drop c="#e0e0e0" /></SearchDrop>
            </SolSearch>
            <SplitBody>
              <ListPane>
                <TreeList>
                  {treeItems.map(([name, kind, exp]) => (
                    <TreeRow key={name}>
                      <TreeArrow>{exp && <TriR />}</TreeArrow>
                      <TreeIcon>
                        {kind === "f" ? <Folder /> : kind === "a" ? <AspxFile /> : kind === "c" ? <ConfigFile /> : <IcoFile />}
                      </TreeIcon>
                      {name}
                    </TreeRow>
                  ))}
                </TreeList>
              </ListPane>
              <ScrollV>
                <ArrowCell $h={26}><ScrollUp /></ArrowCell>
                <Thumb $h={122} $mt={46} />
                <Fill />
                <ArrowCell $h={22}><ScrollDown /></ArrowCell>
              </ScrollV>
            </SplitBody>
          </Panel>
          <Spacer $h={8} />
          <Panel>
            <PanelHeader title="속성" />
            <ObjectRow>
              <ObjName>Table1</ObjName>
              <ObjType>System.Web.UI.WebControls.Table</ObjType>
              <Drop c="#e0e0e0" />
            </ObjectRow>
            <Placed items={propTools} origin={877} h={33} />
            <PropGrid>
              <PropList>
                <CatRow><Minus /><CatLabel>기타</CatLabel></CatRow>
                <PropRow><PropName>(ID)</PropName><PropValue $bold>Table1</PropValue></PropRow>
                <PropRow><PropName>Rows</PropName><PropValue>(컬렉션)</PropValue></PropRow>
                <CatRow><Minus /><CatLabel>데이터</CatLabel></CatRow>
                <PropRow><PropName>(Expressions)</PropName><PropValue /></PropRow>
                <CatRow><Minus /><CatLabel>동작</CatLabel></CatRow>
                {[["ClientIDMode", "Inherit"], ["Enabled", "True"], ["EnableTheming", "True"], ["EnableViewState", "True"], ["SkinID", ""], ["ToolTip", ""], ["ValidateRequestMode", "Inherit"], ["ViewStateMode", "Inherit"]].map(([n, v]) => (
                  <PropRow key={n}><PropName>{n}</PropName><PropValue>{v}</PropValue></PropRow>
                ))}
              </PropList>
              <ScrollV>
                <ArrowCell $h={22}><ScrollUp /></ArrowCell>
                <Thumb $h={112} $mt={0} />
                <Fill />
                <ArrowCell $h={22}><ScrollDown /></ArrowCell>
              </ScrollV>
            </PropGrid>
            <Description>
              <DescTitle>(ID)</DescTitle>
              <DescText>컨트롤의 프로그래밍 이름입니다.</DescText>
            </Description>
          </Panel>
        </Column>
        <SideStrip>진단 도구</SideStrip>
      </Main>
    </Page>
  );
}
